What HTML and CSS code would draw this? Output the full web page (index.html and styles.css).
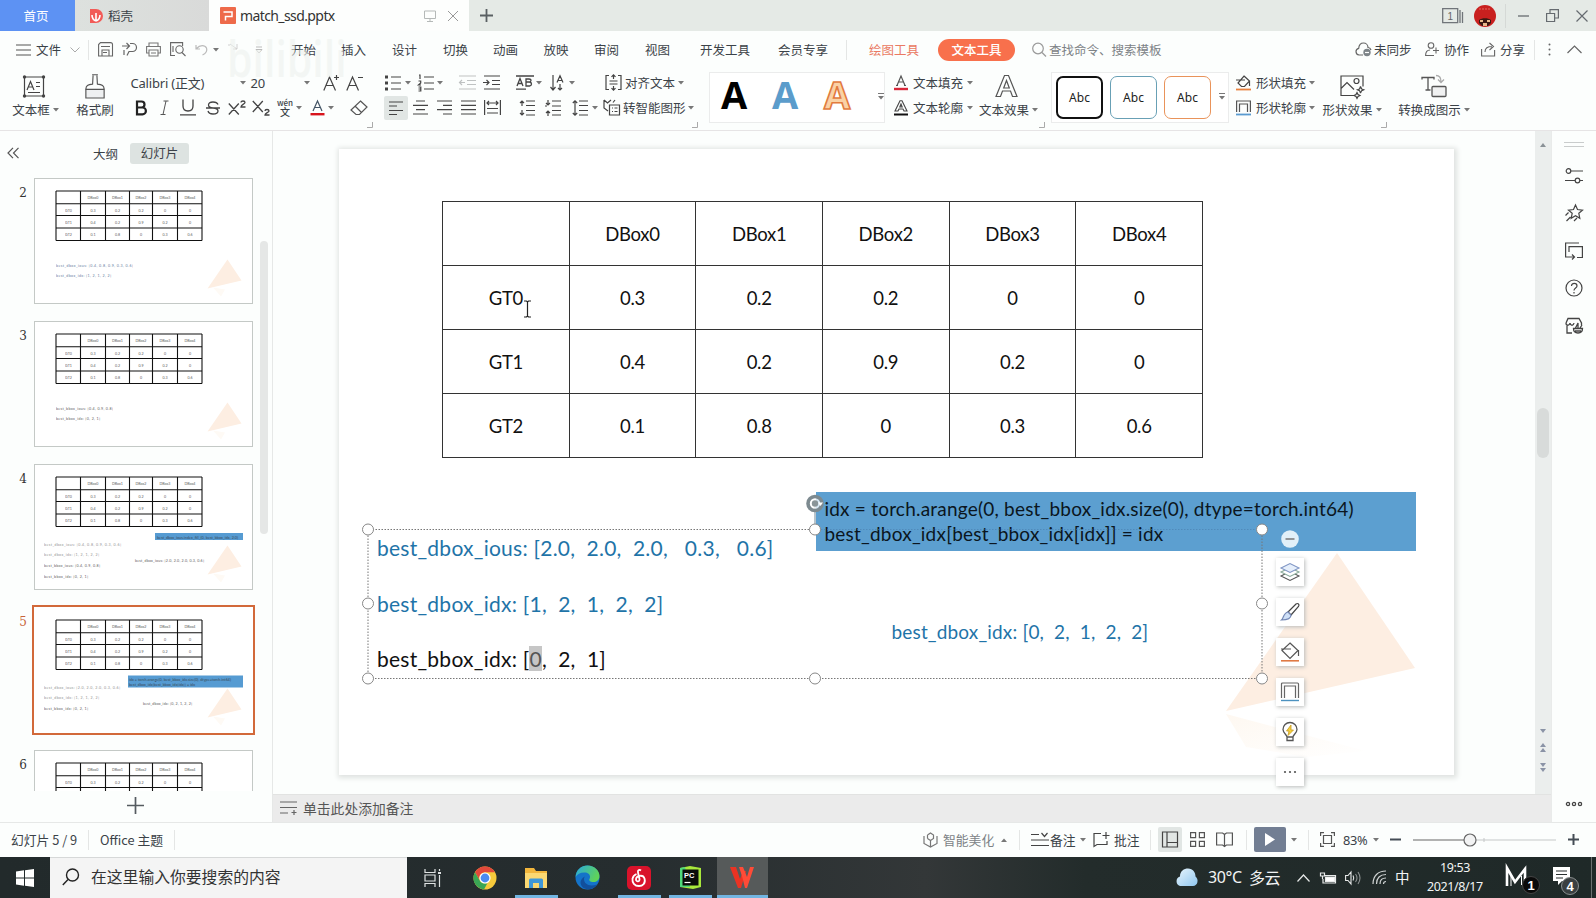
FILE: index.html
```html
<!DOCTYPE html>
<html lang="zh-CN">
<head>
<meta charset="utf-8">
<title>match_ssd.pptx</title>
<link rel="stylesheet" href="styles.css">
</head>
<body>
<svg class="defs" width="0" height="0">
  <defs>
    <symbol id="caret" viewBox="0 0 6 4"><path d="M0 0h6L3 3.6z" fill="#777"/></symbol>
    <symbol id="corner" viewBox="0 0 6 6"><path d="M0 5.5h5.5V0" fill="none" stroke="#aaa"/></symbol>
    <symbol id="mini" viewBox="0 0 219 125">
      <path d="M187 118l-8-9 12 2z" fill="#fefaf5"/>
      <path d="M193.500 81l14 21-34 8z" fill="#fdeee2"/>
      <path d="M22 12.500h146M22 25.200h146M22 37h146M22 49.500h146M22 62h146M22 12.500v49.500M46.500 12.500v49.500M71.500 12.500v49.500M95.500 12.500v49.500M118.500 12.500v49.500M143.500 12.500v49.500M168 12.500v49.500" fill="none" stroke="#111" stroke-width="1.100"/>
      <g class="mini-text" text-anchor="middle">
        <text x="59" y="20.500">DBox0</text><text x="83.500" y="20.500">DBox1</text><text x="107" y="20.500">DBox2</text><text x="131" y="20.500">DBox3</text><text x="156" y="20.500">DBox4</text>
        <text x="34.500" y="33">GT0</text><text x="59" y="33">0.3</text><text x="83.500" y="33">0.2</text><text x="107" y="33">0.2</text><text x="131" y="33">0</text><text x="156" y="33">0</text>
        <text x="34.500" y="45">GT1</text><text x="59" y="45">0.4</text><text x="83.500" y="45">0.2</text><text x="107" y="45">0.9</text><text x="131" y="45">0.2</text><text x="156" y="45">0</text>
        <text x="34.500" y="57.500">GT2</text><text x="59" y="57.500">0.1</text><text x="83.500" y="57.500">0.8</text><text x="107" y="57.500">0</text><text x="131" y="57.500">0.3</text><text x="156" y="57.500">0.6</text>
      </g>
    </symbol>
  </defs>
</svg>

<div class="app">
  <header class="titlebar">
    <div class="tab home">首页</div>
    <div class="tab docer">
      <svg width="14" height="16" viewBox="0 0 14 16"><path d="M1 1h6a7 7 0 0 1 0 14H1z" fill="#f25b57"/><path d="M7 13V5M7 13C4 12 3 10 3 7M7 13c3-1 4-3 4-6" stroke="#fff" stroke-width="1.600" fill="none"/></svg>
      <span>稻壳</span>
    </div>
    <div class="tab active">
      <svg width="16" height="17" viewBox="0 0 16 17"><rect width="16" height="17" rx="1" fill="#ee6a4a"/><path d="M3.500 5H12v4.500H5.500V13.500" fill="none" stroke="#fff" stroke-width="1.500"/></svg>
      <span class="fname">match_ssd.pptx</span>
      <svg class="mon" width="12" height="12" viewBox="0 0 12 12" fill="none" stroke="#b5b9b8"><path d="M.5 1h11v7.500H.5zM6 8.500V11M3 11.500h6"/></svg>
      <svg class="cls" width="12" height="12" viewBox="0 0 12 12" stroke="#999"><path d="M1 1l10 10M11 1L1 11"/></svg>
    </div>
    <svg class="plus" width="13" height="13" viewBox="0 0 13 13"><path d="M6.500 0v13M0 6.500h13" stroke="#5a6063" stroke-width="1.800"/></svg>
    <div class="winctl">
      <svg width="22" height="16" viewBox="0 0 22 16" fill="none" stroke="#70757a" stroke-width="1.300"><path d="M.7.7h15v14H.7zM18 2v13M20.500 4v11"/><text x="5.500" y="12" class="one">1</text></svg>
      <svg width="22" height="22" viewBox="0 0 22 22"><circle cx="11" cy="11" r="11" fill="#c9201f"/><path d="M5 15c3-2.500 9-2.500 12 0v3l-3 3H8l-3-3z" fill="#3c1812"/><path d="M6 15h3v2H6zM13 15h3v2h-3zM9 18h4v3H9z" fill="#e9b98a"/><path d="M5 4h12" stroke="#e2695e" stroke-dasharray="2 1"/></svg>
      <i class="vline"></i>
      <svg width="11" height="12" viewBox="0 0 11 12"><path d="M0 6h11" stroke="#666b70" stroke-width="1.300"/></svg>
      <svg width="13" height="13" viewBox="0 0 13 13" fill="none" stroke="#666b70" stroke-width="1.200"><path d="M.6 4.500h8v8h-8zM4 4V.6h8.400V9H9"/></svg>
      <svg width="12" height="12" viewBox="0 0 12 12" stroke="#666b70" stroke-width="1.200"><path d="M.5.5l11 11M11.500.5l-11 11"/></svg>
    </div>
  </header>

  <nav class="menu">
    <svg width="15" height="12" viewBox="0 0 15 12" stroke="#555" stroke-width="1.200"><path d="M0 1h15M0 6h15M0 11h15"/></svg>
    <span>文件</span>
    <svg width="10" height="6" viewBox="0 0 10 6" fill="none" stroke="#aaa"><path d="M.5.5L5 5 9.500.5"/></svg>
    <i class="vline"></i>
    <svg width="15" height="15" viewBox="0 0 15 15" fill="none" stroke="#666" stroke-width="1.100"><path d="M.6 13V2.500L2.500.6H12.500q2 0 2 2V14H.6zM4 14V8h7v6M3 4.500h9M5 10.500h4"/></svg>
    <svg width="15" height="15" viewBox="0 0 15 15" fill="none" stroke="#666" stroke-width="1.200"><path d="M0 4h7M4.500 1L7.500 4 4.500 7M8 1.500h2.500a3.600 3.600 0 0 1 0 8H7l-2 4M2 8v5"/></svg>
    <svg width="15" height="15" viewBox="0 0 15 15" fill="none" stroke="#777" stroke-width="1.100"><path d="M3 4V1h9v3M3 11H.6V4.500h13.800V11H12M3 8h9v6H3zM5 11h5"/></svg>
    <svg width="16" height="15" viewBox="0 0 16 15" fill="none" stroke="#666" stroke-width="1.100"><path d="M5 13.500H.6V.6h12V4M3 4v6"/><circle cx="9.500" cy="7.500" r="3.700"/><path d="M12 10.500l3.500 3.500"/></svg>
    <svg width="13" height="13" viewBox="0 0 13 13" fill="none" stroke="#bbb" stroke-width="1.200"><path d="M1 2v4h4M1.500 5.500C5 1.500 10 2 11.500 5c1 3-1 5.500-4 7"/></svg>
    <svg class="caret"><use href="#caret"/></svg>
    <svg width="10" height="13" viewBox="0 0 10 13" fill="none" stroke="#d0d0d0"><path d="M9 1v5H5M9 6L2 1M1 1v2"/></svg>
    <svg width="8" height="8" viewBox="0 0 8 8" fill="none" stroke="#bbb"><path d="M1 1h6M1 3.500h6L4 7z"/></svg>
    <span>开始</span><span>插入</span><span>设计</span><span>切换</span><span>动画</span><span>放映</span><span>审阅</span><span>视图</span><span>开发工具</span><span>会员专享</span>
    <i class="vline"></i>
    <span class="draw">绘图工具</span>
    <span class="pill">文本工具</span>
    <svg width="15" height="15" viewBox="0 0 15 15" fill="none" stroke="#999" stroke-width="1.200"><circle cx="6" cy="6.500" r="5.300"/><path d="M10 10.500l4 4"/></svg>
    <span class="dim">查找命令、搜索模板</span>
    <svg width="17" height="15" viewBox="0 0 17 15" fill="none" stroke="#666" stroke-width="1.200"><path d="M8 13H4a3.400 3.400 0 0 1-.3-6.700C4 2.500 6 1 8.500 1 11 1 13 3 13 5.500c1.500 0 2.500 1 3 2.500"/><circle cx="12" cy="10.500" r="3.700" fill="#7d8488" stroke="none"/><path d="M10 10.500h4" stroke="#fff"/></svg>
    <span>未同步</span>
    <svg width="15" height="15" viewBox="0 0 15 15" fill="none" stroke="#666" stroke-width="1.100"><circle cx="6" cy="3.500" r="2.800"/><path d="M9 13.500H.6c0-4 2-5.500 4.500-5.500M8 8.500h6M11 5.500v6"/></svg>
    <span>协作</span>
    <svg width="15" height="15" viewBox="0 0 15 15" fill="none" stroke="#666" stroke-width="1.100"><path d="M.6 7v7h13V8M4 10c0-4 2.500-5.500 7-5.500M8.500 1l4 3.500-4 3.500"/></svg>
    <span>分享</span>
    <i class="vline"></i>
    <svg width="3" height="13" viewBox="0 0 3 13" fill="#666"><circle cx="1.500" cy="1.500" r="1"/><circle cx="1.500" cy="6.500" r="1"/><circle cx="1.500" cy="11.500" r="1"/></svg>
    <svg width="15" height="9" viewBox="0 0 15 9" fill="none" stroke="#666" stroke-width="1.200"><path d="M.5 8L7.500 1l7 7"/></svg>
  </nav>

  <section class="ribbon">
    <div class="big g-box">
      <svg width="24" height="24" viewBox="0 0 24 24" fill="none" stroke="#444" stroke-width="1.200"><path d="M2.500 2.500h19v19h-19z"/><path d="M5 15.500L8.500 7l3.500 8.500M6.300 12.500h4.500M14 8h4M14 12h4M6 18h12"/><g fill="#444" stroke="none"><circle cx="2.500" cy="2.500" r="1.700"/><circle cx="21.500" cy="2.500" r="1.700"/><circle cx="2.500" cy="21.500" r="1.700"/><circle cx="21.500" cy="21.500" r="1.700"/></g></svg>
      <div class="lab">文本框<svg class="caret"><use href="#caret"/></svg></div>
    </div>
    <div class="big g-brush">
      <svg width="22" height="26" viewBox="0 0 22 26" fill="none" stroke="#555" stroke-width="1.200"><path d="M1.500 16h19v9h-19z" fill="#eef0f1"/><path d="M1.500 16c0-4 2-5 7-5.500L9 1.500M20.500 16c0-4-2-5-7-5.500L13 1.500M8 .8h6"/></svg>
      <div class="lab">格式刷</div>
    </div>

    <div class="stack g-font">
      <div class="row r-font1">
        <span class="ui">Calibri (正文)</span><svg class="caret"><use href="#caret"/></svg>
        <span class="ui">20</span><svg class="caret"><use href="#caret"/></svg>
        <svg width="17" height="18" viewBox="0 0 17 18" fill="none" stroke="#444" stroke-width="1.200"><path d="M.8 16.500L6.500 3l6 13.500M3 11.500h7.500M11 3.500h5M13.500 1v5"/></svg>
        <svg width="17" height="18" viewBox="0 0 17 18" fill="none" stroke="#444" stroke-width="1.200"><path d="M.8 16.500L6.500 3l6 13.500M3 11.500h7.500M12 3.500h5"/></svg>
      </div>
      <div class="row r-font2">
        <svg width="13" height="16" viewBox="0 0 13 16" fill="none" stroke="#222" stroke-width="2.200"><path d="M2 1.500h4.500a3 3 0 0 1 0 6H2zM2 7.500h5.500a3.400 3.400 0 0 1 0 6.800H2z"/></svg>
        <svg width="9" height="16" viewBox="0 0 9 16" stroke="#555"><path d="M3.500 1h5M.5 14.500h5M6 1L3 14.500"/></svg>
        <svg width="16" height="17" viewBox="0 0 16 17" fill="none" stroke="#444" stroke-width="1.300"><path d="M3 .5V7q0 5 5 5t5-5V.5M0 15.800h16"/></svg>
        <svg width="14" height="14" viewBox="0 0 14 14" fill="none" stroke="#444" stroke-width="1.300"><path d="M12 3.500C11 1 9.500 1 7 1 4 1 2.500 2 2.500 4 2.500 6 4 6.700 7 7s5 1 5 3-2 3-5 3-4.500-1-5-3M0 7h14"/></svg>
        <svg width="19" height="16" viewBox="0 0 19 16" fill="none" stroke="#444" stroke-width="1.300"><path d="M.8 3.500l10 11M10.800 3.500l-10 11M13 2.500c0-2 4-2 4 0 0 1.500-4 2-4 4.500h4.500"/></svg>
        <svg width="19" height="17" viewBox="0 0 19 17" fill="none" stroke="#444" stroke-width="1.300"><path d="M.8 2l10 11M10.800 2l-10 11M13 12c0-2 4-2 4 0 0 1.500-4 2-4 4h4.500"/></svg>
        <span class="wen"><b>wén</b><b>文</b></span><svg class="caret"><use href="#caret"/></svg>
        <svg width="15" height="16" viewBox="0 0 15 16" fill="none" stroke="#456" stroke-width="1.200"><path d="M3 11L7.500 1 12 11M4.700 7.500h5.600"/><path d="M.5 14.200h14" stroke="#d8141c" stroke-width="2.400"/></svg>
        <svg class="caret"><use href="#caret"/></svg>
        <svg width="18" height="16" viewBox="0 0 18 16" fill="none" stroke="#555" stroke-width="1.200"><path d="M10.500 1l6.500 6-7.500 7.500H6L1 10zM5 6l6.500 6.500"/></svg>
      </div>
      <svg class="corner"><use href="#corner"/></svg>
    </div>

    <div class="stack g-para">
      <div class="row r-para1">
        <svg width="16" height="16" viewBox="0 0 16 16" stroke="#444" stroke-width="1.200"><path d="M6 2h10M6 8h10M6 14h10"/><path d="M0 2h3M0 8h3M0 14h3" stroke-width="3"/></svg><svg class="caret"><use href="#caret"/></svg>
        <svg width="16" height="16" viewBox="0 0 16 16" fill="none" stroke="#444" stroke-width="1.200"><path d="M6 2h10M6 8h10M6 14h10M1 0h1v4M.5 6h2.200v2L.5 10h2.500M.5 12h2.300v4H.5M.5 14h2"/></svg><svg class="caret"><use href="#caret"/></svg>
        <svg width="17" height="15" viewBox="0 0 17 15" fill="none" stroke="#bfc2c2" stroke-width="1.200"><path d="M0 1h17M8 5.500h9M8 9.500h9M0 14h17M0 7.500h6M3 5L.5 7.500 3 10"/></svg>
        <svg width="17" height="15" viewBox="0 0 17 15" fill="none" stroke="#444" stroke-width="1.200"><path d="M1 1h16M9 5.500h8M9 9.500h8M1 14h16M0 7.500h6M3.500 5L6 7.500 3.500 10"/></svg>
        <svg width="18" height="15" viewBox="0 0 18 15" fill="none" stroke="#444" stroke-width="1.300"><path d="M0 1h18M1 11l3-7.500L7 11M2 8.500h4M10 4v7h3.500q2-.3 2-2t-2-2H10h3q2 0 2-1.500T13 4zM0 14.200h10"/></svg><svg class="caret"><use href="#caret"/></svg>
        <svg width="15" height="16" viewBox="0 0 15 16" fill="none" stroke="#444" stroke-width="1.200"><path d="M3 0v15M.5 12L3 15l2.500-3M7 7.500L10 .8l3 6.700M8 5.500h4M10 9v6M8 13l2 2 2-2"/></svg><svg class="caret"><use href="#caret"/></svg>
        <svg width="17" height="17" viewBox="0 0 17 17" fill="none" stroke="#444" stroke-width="1.200"><path d="M4 1.500H1v14h3M13 1.500h3v14h-3M4.500 7h8M4.500 10h8M8.500 5V.8M6.500 2.800l2-2 2 2M8.500 12v4.200M6.500 14.200l2 2 2-2"/></svg>
        <span>对齐文本</span><svg class="caret"><use href="#caret"/></svg>
      </div>
      <div class="row r-para2">
        <svg class="sel" width="24" height="24" viewBox="0 0 24 24" stroke="#444" stroke-width="1.200"><path d="M5 6h14M5 10h8M5 14.500h14M5 18.500h8"/></svg>
        <svg width="15" height="15" viewBox="0 0 15 15" stroke="#444" stroke-width="1.200"><path d="M3 1h9M0 5.300h15M3 9.700h9M0 14h15"/></svg>
        <svg width="15" height="15" viewBox="0 0 15 15" stroke="#444" stroke-width="1.200"><path d="M0 1h15M6 5.300h9M0 9.700h15M6 14h9"/></svg>
        <svg width="15" height="15" viewBox="0 0 15 15" stroke="#444" stroke-width="1.200"><path d="M0 1h15M0 5.300h15M0 9.700h15M0 14h15"/></svg>
        <svg width="17" height="15" viewBox="0 0 17 15" fill="none" stroke="#444" stroke-width="1.200"><path d="M.6 0v15M16.400 0v15M3 3h11M5 1L3 3l2 2M12 1l2 2-2 2M3 8.500h11M3 13h11"/></svg>
        <svg width="16" height="16" viewBox="0 0 16 16" fill="none" stroke="#444" stroke-width="1.200"><path d="M7 1h9M7 5.500h9M7 10.500h9M7 15h9M3 1v5M1 3l2-2 2 2M3 10v5M1 13l2 2 2-2"/></svg>
        <svg width="16" height="16" viewBox="0 0 16 16" fill="none" stroke="#444" stroke-width="1.200"><path d="M7 1h9M0 6h2M7 6h9M7 10.500h9M7 15h9M3 0v5M1 3l2 2 2-2M3 11v5M1 13l2-2 2 2"/></svg>
        <svg width="16" height="16" viewBox="0 0 16 16" fill="none" stroke="#444" stroke-width="1.200"><path d="M7 1h9M7 5.500h9M7 10.500h9M7 15h9M3 1v14M.8 3L3 .8 5.200 3M.8 13L3 15.200 5.200 13"/></svg><svg class="caret"><use href="#caret"/></svg>
        <svg width="17" height="17" viewBox="0 0 17 17" fill="none" stroke="#444" stroke-width="1.200"><path d="M10 3.500L12 1M1 1l3.500 3L8 1M1 1v8l4 3M6.500 6h10v10h-10zM9 9h1M11.500 9h3M9 12.500h1M11.500 12.500h3"/></svg>
        <span>转智能图形</span><svg class="caret"><use href="#caret"/></svg>
      </div>
      <svg class="corner"><use href="#corner"/></svg>
    </div>

    <div class="gallery g-art">
      <svg width="28" height="30" viewBox="0 0 28 30"><text x="14" y="28" class="wa" fill="#000">A</text></svg>
      <svg width="28" height="30" viewBox="0 0 28 30"><text x="14" y="28" class="wa" fill="#5b9ccb">A</text></svg>
      <svg width="30" height="30" viewBox="0 0 30 30"><text x="15" y="28" class="wa" fill="#fad2a5" stroke="#e27b3e" stroke-width="1.600">A</text></svg>
      <svg class="more" width="6" height="7" viewBox="0 0 6 7"><path d="M0 .5h6" stroke="#777"/><path d="M0 3h6L3 6.500z" fill="#777"/></svg>
    </div>

    <div class="stack g-tfill">
      <div class="row r-fill">
        <svg width="14" height="16" viewBox="0 0 14 16" fill="none" stroke="#555" stroke-width="1.200"><path d="M3 10.500L7 1l4 9.500M4.500 7h5M2 10.500h2M10 10.500h2"/><path d="M0 14h14" stroke="#d8283a" stroke-width="2.400"/></svg>
        <span>文本填充</span><svg class="caret"><use href="#caret"/></svg>
      </div>
      <div class="row r-fill">
        <svg width="14" height="16" viewBox="0 0 14 16" fill="none" stroke="#444" stroke-width="1.100"><path d="M1 11L6 .8h2L13 11h-3l-1-2H5l-1 2zM7 4L5.800 7h2.400z"/><path d="M0 14.500h14" stroke="#111" stroke-width="2"/></svg>
        <span>文本轮廓</span><svg class="caret"><use href="#caret"/></svg>
      </div>
    </div>
    <div class="big g-teff">
      <svg width="23" height="24" viewBox="0 0 23 24" fill="none" stroke="#555" stroke-width="1.200"><path d="M1 22L9.500 1h4L22 22h-4.500l-2-5.500h-8l-2 5.500zM11.500 6L8.700 13.500h5.600z"/></svg>
      <div class="lab">文本效果<svg class="caret"><use href="#caret"/></svg></div>
      <svg class="corner"><use href="#corner"/></svg>
    </div>

    <div class="gallery g-shape">
      <div class="abc k">Abc</div><div class="abc b">Abc</div><div class="abc o">Abc</div>
      <svg class="more" width="6" height="7" viewBox="0 0 6 7"><path d="M0 .5h6" stroke="#777"/><path d="M0 3h6L3 6.500z" fill="#777"/></svg>
    </div>

    <div class="stack g-sfill">
      <div class="row r-fill">
        <svg width="15" height="16" viewBox="0 0 15 16" fill="none" stroke="#444" stroke-width="1.200"><path d="M8 1l5.500 5-5 5.500h-3L2 8zM0 5h9M13.500 6v5"/><path d="M0 14.500h15" stroke="#e8823f" stroke-width="1.800"/></svg>
        <span>形状填充</span><svg class="caret"><use href="#caret"/></svg>
      </div>
      <div class="row r-fill">
        <svg width="15" height="16" viewBox="0 0 15 16" fill="none" stroke="#555" stroke-width="1.200"><path d="M.6 12V1h13.800v11M3.500 12V4h8v8"/><path d="M0 14.500h15" stroke="#5a9bd0" stroke-width="1.800"/></svg>
        <span>形状轮廓</span><svg class="caret"><use href="#caret"/></svg>
      </div>
    </div>
    <div class="big g-seff">
      <svg width="24" height="24" viewBox="0 0 24 24" fill="none" stroke="#444" stroke-width="1.200"><path d="M14 21H1V1.500h22V12M1 14l6-6 7 7"/><circle cx="16.500" cy="6.500" r="2.500"/><path d="M20.500 12l1.200 2.500 2 .8-2 .8-1.200 2.500M17 18l1 2 2 1-2 1-1 2-1-2-2-1 2-1zM20.500 12l-1 2.500-2 .8 2 .8 1 2.500"/></svg>
      <div class="lab">形状效果<svg class="caret"><use href="#caret"/></svg></div>
      <svg class="corner"><use href="#corner"/></svg>
    </div>
    <div class="big g-conv">
      <svg width="26" height="24" viewBox="0 0 26 24" fill="none" stroke="#555" stroke-width="1.300"><path d="M1 5V3h12v2M7 3v12M4.500 15.500h5"/><path d="M15 1q5 0 5 6M17 5l3 3 3-3" stroke="#aaa"/><rect x="11" y="12" width="14" height="10" rx="1" fill="#f0f1f1"/></svg>
      <div class="lab">转换成图示<svg class="caret"><use href="#caret"/></svg></div>
    </div>
  </section>
  <div class="watermark">bilibili</div>

  <main class="work">
    <aside class="panel">
      <div class="ptabs">
        <svg width="12" height="12" viewBox="0 0 12 12" fill="none" stroke="#555" stroke-width="1.200"><path d="M6 .8L1 6l5 5.200M11.500.8l-5 5.200 5 5.200"/></svg>
        <span>大纲</span><span class="on">幻灯片</span>
      </div>
      <div class="plist">
        <div class="item"><b>2</b><svg class="thumb" viewBox="0 0 219 125"><use href="#mini" width="219" height="125"/><g class="mini-text blue"><text x="22" y="88" textLength="77">best_dbox_ious: [0.4, 0.8, 0.9, 0.3, 0.6]</text><text x="22" y="98.500" textLength="55">best_dbox_idx: [1, 2, 1, 2, 2]</text></g></svg></div>
        <div class="item"><b>3</b><svg class="thumb" viewBox="0 0 219 125"><use href="#mini" width="219" height="125"/><g class="mini-text"><text x="22" y="88" textLength="57">best_bbox_ious: [0.4, 0.9, 0.8]</text><text x="22" y="98.500" textLength="44">best_bbox_idx: [0, 2, 1]</text></g></svg></div>
        <div class="item"><b>4</b><svg class="thumb" viewBox="0 0 219 125"><use href="#mini" width="219" height="125"/><rect x="121" y="68.500" width="88" height="7" fill="#569bd2"/><g class="mini-text"><text x="123" y="74" textLength="81">best_dbox_ious.index_fill_(0, best_bbox_idx, 2.0)</text><text x="10" y="81" textLength="77" class="gray">best_dbox_ious: [0.4, 0.8, 0.9, 0.3, 0.6]</text><text x="10" y="91.500" textLength="55" class="gray">best_dbox_idx: [1, 2, 1, 2, 2]</text><text x="101" y="97" textLength="69">best_dbox_ious: [2.0, 2.0, 2.0, 0.3, 0.6]</text><text x="10" y="102.500" textLength="56">best_bbox_ious: [0.4, 0.9, 0.8]</text><text x="10" y="113" textLength="44">best_bbox_idx: [0, 2, 1]</text></g></svg></div>
        <div class="item cur"><b>5</b><svg class="thumb" viewBox="0 0 219 125"><use href="#mini" width="219" height="125"/><rect x="94" y="68" width="115" height="12" fill="#569bd2"/><g class="mini-text"><text x="95" y="73" textLength="102">idx = torch.arange(0, best_bbox_idx.size(0), dtype=torch.int64)</text><text x="95" y="78" textLength="66">best_dbox_idx[best_bbox_idx[idx]] = idx</text><text x="10" y="81" textLength="76" class="gray">best_dbox_ious: [2.0, 2.0, 2.0, 0.3, 0.6]</text><text x="10" y="91.500" textLength="55" class="gray">best_dbox_idx: [1, 2, 1, 2, 2]</text><text x="109" y="97" textLength="49">best_dbox_idx: [0, 2, 1, 2, 2]</text><text x="10" y="102.500" textLength="44">best_bbox_idx: [0, 2, 1]</text></g></svg></div>
        <div class="item"><b>6</b><svg class="thumb" viewBox="0 0 219 125"><use href="#mini" width="219" height="125"/></svg></div>
        <i class="pscroll"></i>
      </div>
      <div class="padd"><svg width="17" height="17" viewBox="0 0 17 17"><path d="M8.500 0v17M0 8.500h17" stroke="#555b60" stroke-width="1.700"/></svg></div>
    </aside>

    <div class="center">
      <div class="canvas">
        <div class="stage">
          <div class="slide">
            <svg class="deco" width="200" height="210" viewBox="0 0 200 210"><defs><linearGradient id="fade" x1="0" y1="0" x2="1" y2="1"><stop offset="0" stop-color="#fef8f1"/><stop offset="1" stop-color="#fff"/></linearGradient></defs><path d="M111 0l78 115-189 43z" fill="#fdeee2"/><path d="M0 161l20 33 60 10 60-6z" fill="url(#fade)"/></svg>
            <table class="grid">
              <tr><td></td><td>DBox0</td><td>DBox1</td><td>DBox2</td><td>DBox3</td><td>DBox4</td></tr>
              <tr><td>GT0</td><td>0.3</td><td>0.2</td><td>0.2</td><td>0</td><td>0</td></tr>
              <tr><td>GT1</td><td>0.4</td><td>0.2</td><td>0.9</td><td>0.2</td><td>0</td></tr>
              <tr><td>GT2</td><td>0.1</td><td>0.8</td><td>0</td><td>0.3</td><td>0.6</td></tr>
            </table>
            <div class="code"><div class="l1">idx = torch.arange(0, best_bbox_idx.size(0), dtype=torch.int64)</div><div class="l2">best_dbox_idx[best_bbox_idx[idx]] = idx</div></div>
            <div class="result">best_dbox_idx: [0,  2,  1,  2,  2]</div>
            <div class="textbox"><p class="a">best_dbox_ious: [2.0,  2.0,  2.0,   0.3,   0.6]</p><p class="b">best_dbox_idx: [1,  2,  1,  2,  2]</p><p class="c">best_bbox_idx: [<mark>0</mark>,  2,  1]</p></div>
            <svg class="selection" width="920" height="200" viewBox="0 0 920 200">
              <path d="M460 39.500H13v149h894v-76" fill="none" stroke="#777" stroke-dasharray="1.500 1.500"/>
              <path d="M460 39.500h447" fill="none" stroke="#4a7fae" stroke-dasharray="1.500 1.500" stroke-opacity=".6"/>
              <path d="M907 39.500v74" fill="none" stroke="#777" stroke-dasharray="1.500 1.500"/>
              <path d="M460 17v22" stroke="#b8c4cc" stroke-width="2"/>
              <circle cx="460" cy="13.500" r="7" fill="#fff" fill-opacity=".75" stroke="#7d8a90" stroke-width="3.600"/>
              <circle cx="460" cy="13.500" r="3.200" fill="#8a9598"/>
              <path d="M463 12.500h5l-2.500 3.500z" fill="#fff"/>
              <g fill="#fff" stroke="#888"><circle cx="13" cy="39.500" r="5.500"/><circle cx="460" cy="39.500" r="5.500"/><circle cx="907" cy="39.500" r="5.500"/><circle cx="13" cy="113.500" r="5.500"/><circle cx="907" cy="113.500" r="5.500"/><circle cx="13" cy="188.500" r="5.500"/><circle cx="460" cy="188.500" r="5.500"/><circle cx="907" cy="188.500" r="5.500"/></g>
            </svg>
            <svg class="cursor" width="9" height="18" viewBox="0 0 9 18" fill="none" stroke="#222" stroke-width="1.200"><path d="M1 1h2.500l1 1 1-1H8M1 17h2.500l1-1 1 1H8M4.500 2v14"/></svg>
            <div class="float">
              <svg class="min" width="18" height="18" viewBox="0 0 18 18"><circle cx="9" cy="9" r="8.800" fill="#e2f0f8"/><path d="M4.500 9h9" stroke="#777" stroke-width="1.500"/></svg>
              <div class="fb"><svg width="20" height="20" viewBox="0 0 20 20" fill="#fff" stroke="#555" stroke-width="1.100"><path d="M1 14l9-4.500 9 4.500-9 4.500z"/><path d="M1 10l9-4.500 9 4.500-9 4.500z" stroke="#8a9"/><path d="M1 6l9-4.500L19 6l-9 4.500z" fill="#e6effb" stroke="#7f95c4"/></svg></div>
              <div class="fb"><svg width="20" height="20" viewBox="0 0 20 20" fill="none" stroke="#444" stroke-width="1.200"><path d="M8 10l8-8q1.500-1 2.500 0t0 2.500l-7.500 8.500z"/><path d="M8 10l3 3c0 3-2 5-9.500 5C4 16 3 11 8 10z" fill="#cfe0f7" stroke="#7488b5"/></svg></div>
              <div class="fb"><svg width="20" height="20" viewBox="0 0 20 20" fill="none" stroke="#555" stroke-width="1.200"><path d="M10 1l8 7.500-8 8-8-8zM1 7h10M18.500 8v6"/><path d="M1 18.800h18" stroke="#e07a45" stroke-width="1.600"/></svg></div>
              <div class="fb"><svg width="20" height="20" viewBox="0 0 20 20" fill="none" stroke="#666" stroke-width="1.200"><path d="M1.500 16V2q0-1 1-1h15q1 0 1 1v14M4.500 16V4h11v12"/><path d="M1 18.500h18" stroke="#4d92c0" stroke-width="1.400"/></svg></div>
              <div class="fb"><svg width="20" height="20" viewBox="0 0 20 20" fill="none" stroke="#555" stroke-width="1.300"><path d="M7 15c0-2-4-4-4-7.500a7 7 0 0 1 14 0c0 3.500-4 5.500-4 7.500zM7 15v3.500h6V15"/><path d="M11 3L6.500 9H9l-1 4.500L13.500 8H11z" fill="#f6d03c" stroke="#c69a22" stroke-width=".8"/></svg></div>
              <div class="fb"><svg width="14" height="4" viewBox="0 0 14 4" fill="#555"><circle cx="2" cy="2" r="1.100"/><circle cx="7" cy="2" r="1.100"/><circle cx="12" cy="2" r="1.100"/></svg></div>
            </div>
          </div>
        </div>
        <div class="vbar">
          <svg width="6" height="4" viewBox="0 0 6 4"><path d="M0 4h6L3 0z" fill="#8a9196"/></svg>
          <i></i>
          <svg class="nav" width="6" height="48" viewBox="0 0 6 48" fill="#8a93a6"><path d="M0 2h6L3 6zM0 20h6l-3-4zM0 25h6l-3-4zM0 36h6l-3 4zM0 41h6l-3 4z"/></svg>
        </div>
      </div>
      <div class="notes"><svg width="17" height="14" viewBox="0 0 17 14" stroke="#666" stroke-width="1.200"><path d="M0 1h17M0 6.500h17M0 12h8M14 9v5M11.500 11.500h5"/></svg><span>单击此处添加备注</span></div>
    </div>

    <aside class="rail">
      <svg width="20" height="5" viewBox="0 0 20 5" stroke="#c9cccc"><path d="M0 .5h20M0 4.500h20"/></svg>
      <svg width="18" height="18" viewBox="0 0 18 18" fill="none" stroke="#444" stroke-width="1.200"><circle cx="3.500" cy="4" r="2.300"/><circle cx="12.500" cy="13.500" r="2.300"/><path d="M6 4h12M0 13.500h10M15 13.500h3"/></svg>
      <svg width="18" height="18" viewBox="0 0 18 18" fill="none" stroke="#444" stroke-width="1.200"><path d="M10.500 1l2 4.500 5 .6-3.700 3.200 1 5-4.300-2.600-4.300 2.600 1-5L3.500 6.100l5-.6zM.5 11.500l3-3M1.500 17l4-4M9 17l3-3"/></svg>
      <svg width="18" height="18" viewBox="0 0 18 18" fill="none" stroke="#444" stroke-width="1.200"><path d="M14 1H.6v14H9M7 12.500L9.500 15 7 17.500M4 10V4.600h13.400V15.500H12"/></svg>
      <svg width="18" height="18" viewBox="0 0 18 18" fill="none" stroke="#444" stroke-width="1.200"><circle cx="9" cy="9" r="8"/><path d="M6.500 7c0-3.500 5.500-3.500 5.500 0C12 9 9 9 9 11.500M9 13v1.500"/></svg>
      <svg width="18" height="18" viewBox="0 0 18 18" fill="none" stroke="#444" stroke-width="1.300"><path d="M2 9v7h5M1 6l2-4.500h11L16.500 6v2M1 6c0 3 3.500 3 4 0 .5 3 3.500 3 4 0"/><path d="M8.500 11.500h9c0 6-9 6-9 0zM13 11V6l-2.500 5M15 11l2-3M10 14h6"/></svg>
      <svg class="ooo" width="18" height="6" viewBox="0 0 18 6" fill="none" stroke="#444" stroke-width="1.300"><circle cx="3" cy="3" r="1.600"/><circle cx="9" cy="3" r="1.600"/><circle cx="15" cy="3" r="1.600"/></svg>
    </aside>
  </main>

  <footer class="status">
    <span>幻灯片 5 / 9</span><i class="vline"></i><span>Office 主题</span><i class="vline"></i>
    <svg width="15" height="16" viewBox="0 0 15 16" fill="none" stroke="#777" stroke-width="1.200"><path d="M4.500 3L7.500 1l3 2v3.500l-3 2-3-2M4.500 6.500V3M1 4v7.500l6.500 3.500 6.500-3.500V4M7.500 8.500V15"/></svg>
    <span class="dim">智能美化</span><svg class="caret up"><use href="#caret"/></svg><i class="vline"></i>
    <svg width="18" height="14" viewBox="0 0 18 14" fill="none" stroke="#444" stroke-width="1.200"><path d="M0 1.500h8M0 7h18M0 12.500h18M10.500 0L13.500 3.500 16.500 0"/></svg>
    <span>备注</span><svg class="caret"><use href="#caret"/></svg>
    <svg width="17" height="16" viewBox="0 0 17 16" fill="none" stroke="#444" stroke-width="1.200"><path d="M8 1.500H1v13l3-2h10V9M13 0v7M9.500 3.500h7"/></svg>
    <span>批注</span><i class="vline"></i>
    <svg class="sel" width="24" height="25" viewBox="0 0 24 25" fill="none" stroke="#444" stroke-width="1.200"><path d="M4.500 5h15v15h-15zM9 5v15M9 15.500h10.500"/></svg>
    <svg width="15" height="15" viewBox="0 0 15 15" fill="none" stroke="#555" stroke-width="1.200"><path d="M.6.6h5v5h-5zM9.400.6h5v5h-5zM.6 9.400h5v5h-5zM9.400 9.400h5v5h-5z"/></svg>
    <svg width="17" height="15" viewBox="0 0 17 15" fill="none" stroke="#555" stroke-width="1.200"><path d="M.6 1h6l1.900 1.500L10.400 1h6v12h-6l-1.900 1.500L6.600 13h-6zM8.500 2.500v12"/></svg>
    <i class="vline"></i>
    <div class="play"><svg width="10" height="13" viewBox="0 0 10 13"><path d="M0 0l10 6.500L0 13z" fill="#fff"/></svg></div>
    <svg class="caret"><use href="#caret"/></svg><i class="vline"></i>
    <svg width="15" height="15" viewBox="0 0 15 15" fill="none" stroke="#555" stroke-width="1.200"><path d="M.6 4V.6H4M11 .6h3.400V4M14.400 11v3.400H11M4 14.400H.6V11M3.500 3.500h8v8h-8z"/></svg>
    <span class="ui">83%</span><svg class="caret"><use href="#caret"/></svg>
    <svg width="11" height="11" viewBox="0 0 11 11"><path d="M0 5.500h11" stroke="#444c55" stroke-width="2"/></svg>
    <svg width="143" height="14" viewBox="0 0 143 14"><path d="M57 7h86M71 5v4" stroke="#c5c8c8"/><path d="M0 7h57" stroke="#666" stroke-width="1.200"/><circle cx="57" cy="7" r="6" fill="#f2f3f3" stroke="#666" stroke-width="1.200"/></svg>
    <svg width="11" height="11" viewBox="0 0 11 11"><path d="M0 5.500h11M5.500 0v11" stroke="#444c55" stroke-width="2"/></svg>
  </footer>

  <footer class="taskbar">
    <div class="start"><svg width="18" height="18" viewBox="0 0 18 18" fill="#fff"><path d="M0 2.500L8 1.300V8.500H0zM9 1.200L18 0v8.500H9zM0 9.500h8v7.200L0 15.500zM9 9.500h9V18L9 16.800z"/></svg></div>
    <div class="search"><svg width="18" height="18" viewBox="0 0 18 18" fill="none" stroke="#222" stroke-width="1.400"><circle cx="10.500" cy="7" r="6"/><path d="M6 11.500L.8 17"/></svg><span>在这里输入你要搜索的内容</span></div>
    <div class="tk view"><svg width="18" height="18" viewBox="0 0 18 18" fill="none" stroke="#dfe3e3" stroke-width="1.200"><path d="M1 0v3.500h10V0M1 18v-3.500h10V18M1 6h10v6H1zM15.500 0v2M15.500 6v12"/><path d="M14 4h3" stroke-width="2"/></svg></div>
    <div class="tk"><svg width="24" height="24" viewBox="0 0 24 24"><circle cx="12" cy="12" r="11.500" fill="#f6c93b"/><path d="M2 6.300A11.500 11.500 0 0 1 22 6.300H12A5.700 5.700 0 0 0 7 15z" fill="#e2493b"/><path d="M2 6.300l5 8.700c1 1.800 4 3.500 7.500 2L11 23.500A11.500 11.500 0 0 1 2 6.300z" fill="#3aa655"/><circle cx="12" cy="12" r="5.600" fill="#fff"/><circle cx="12" cy="12" r="4.400" fill="#4a8bf0"/></svg></div>
    <div class="tk run"><svg width="24" height="22" viewBox="0 0 24 22"><path d="M1 1h9l2 3h11v17H1z" fill="#f2b63c"/><path d="M1 6h22v15H1z" fill="#fbd872"/><path d="M5 21v-8q0-1.500 1.500-1.500h11Q19 11.500 19 13v8h-4v-5H9v5z" fill="#3f97d8"/></svg></div>
    <div class="tk"><svg width="25" height="25" viewBox="0 0 25 25"><defs><linearGradient id="eg" x1="0" y1="0" x2="1" y2=".4"><stop offset="0" stop-color="#28a9e0"/><stop offset="1" stop-color="#5fd35a"/></linearGradient></defs><circle cx="12.500" cy="12.500" r="12" fill="#1473c9"/><path d="M.6 12C1 5 6 .5 12.500.5 20 .5 24.500 6 24.500 11c0 4-3 6-6 6-3.500 0-5-1.500-4-3 1.500-2.500 0-6-4-6.500C6 7 2 9 .6 12z" fill="url(#eg)"/><path d="M9 14c0 5 5 8 13 5.500-4 6-12 6-15 2s-1-8 3-10c-1 1-1 2-1 2.500z" fill="#124f9c"/></svg></div>
    <div class="tk run"><svg width="24" height="24" viewBox="0 0 24 24"><rect width="24" height="24" rx="5" fill="#d9132b"/><path d="M14 4.500c-2-1.500-3.500 0-3 2l1.500 6.500c.5 3-3.500 3-3.500.5 0-4 7-5.500 8.500-1 1.500 5-2 7.500-5.500 7.500-4.500 0-7-3.500-6.500-7 .3-2.500 1.500-4 4-5" fill="none" stroke="#fff" stroke-width="1.800"/></svg></div>
    <div class="tk run"><svg width="21" height="23" viewBox="0 0 21 23"><path d="M0 2L10 0l11 2v19l-8 2L0 21z" fill="#a8e83c"/><path d="M0 2l5-1 5 20-10 0z" fill="#4fd87a"/><path d="M2.500 3.500h16v16h-16z" fill="#0a0d0a"/><text x="4" y="11.500" class="pc">PC</text><path d="M4.500 16.500h6" stroke="#fff" stroke-width="1.200"/></svg></div>
    <div class="tk run cur"><svg width="24" height="21" viewBox="0 0 24 21"><path d="M0 0h6l4 12 3-8 3 0-5 17H8z" fill="#ea3323"/><path d="M9 0h4l4 10 3-10h4l-7 21h-2L12 9z" fill="#ff4b37"/></svg></div>
    <div class="tray">
      <svg width="23" height="19" viewBox="0 0 23 19"><defs><linearGradient id="cl" x1="0" y1="0" x2="1" y2="1"><stop offset="0" stop-color="#e9f6fd"/><stop offset="1" stop-color="#8fc6ef"/></linearGradient></defs><path d="M5 18a5 5 0 0 1 0-9.500C5 3 9 .5 13 .5c5 0 7.500 4 7.500 8C24 11 23 18 18 18z" fill="url(#cl)"/></svg>
      <span class="temp">30°C</span><span class="temp">多云</span>
      <svg width="13" height="8" viewBox="0 0 13 8" fill="none" stroke="#e8eaea" stroke-width="1.200"><path d="M.5 7.500l6-6.500 6 6.500"/></svg>
      <svg width="17" height="12" viewBox="0 0 17 12" fill="none" stroke="#e8eaea" stroke-width="1.200"><path d="M4 3.500h11.500v7.500H3V7"/><path d="M5.500 5h9v4.500h-9z" fill="#fff"/><path d="M.5 1h4v3h-4zM2.500 4v3"/></svg>
      <svg width="17" height="14" viewBox="0 0 17 14" fill="none" stroke="#e8eaea" stroke-width="1.100"><path d="M.6 4.500H3l3-3.500v12L3 9.500H.6zM8 4.500q1.500 2.500 0 5"/><path d="M10.500 3q3 4 0 8M13 1q4 6 0 12" stroke="#8d9292"/></svg>
      <svg width="15" height="15" viewBox="0 0 15 15" fill="none" stroke="#cfd3d3" stroke-width="1.200"><path d="M1 14C1 6 6 1 14 1M4.500 14C4.500 8 8 4.500 14 4.500M8 14c0-4 2-6 6-6M11.500 14c0-2 1-2.500 2.500-2.500"/></svg>
      <span class="ime">中</span>
      <div class="clock"><span>19:53</span><span>2021/8/17</span></div>
      <svg width="33" height="36" viewBox="0 0 33 36"><path d="M2 26V8l8 14L20 9v12" fill="none" stroke="#fff" stroke-width="2.600"/><path d="M6 26V16M16.500 25V16" stroke="#fff"/><circle cx="26" cy="25" r="8.500" fill="#0a0a0a" stroke="#444"/><text x="26" y="30" class="bd">1</text></svg>
      <svg width="28" height="36" viewBox="0 0 28 36"><path d="M0 7h17v14H9l-4 4v-4H0z" fill="#fff"/><path d="M3 11h11M3 14.500h11M3 18h7" stroke="#2a3030" stroke-width="1.200"/><circle cx="17" cy="26" r="8.500" fill="#3a3f40" stroke="#8a8f8f"/><text x="17" y="31" class="bd">4</text></svg>
      <i class="edge"></i>
    </div>
  </footer>
</div>
</body>
</html>
```
FILE: styles.css
```css
* { box-sizing: border-box; }
body { margin: 0; font-family: "Noto Sans CJK SC", sans-serif; font-size: 12.500px; color: #3b4248; }
svg { display: block; flex: none; overflow: visible; }
.defs { position: absolute; }
.app { width: 1596px; height: 898px; overflow: hidden; display: flex; flex-direction: column; background: #fcfefd; position: relative; }
.vline { display: block; width: 1px; height: 20px; background: #e4e6e5; }
.caret { width: 6px; height: 4px; }
.caret.up { transform: rotate(180deg); }
.ui { font-family: "Noto Sans", "Noto Sans CJK SC", sans-serif; }

/* title bar */
.titlebar { height: 31px; flex: none; display: flex; align-items: center; background: #e5eae6; }
.tab { height: 31px; display: flex; align-items: center; }
.home { width: 75px; justify-content: center; padding-right: 3px; background: #5d92f3; color: #fff; }
.docer { width: 134px; padding-left: 14px; gap: 5px; background: linear-gradient(90deg, #dde1de, #d9dad9); }
.active { width: 260px; padding-left: 11px; background: #fdfefd; color: #333; }
.fname { font: 14px "Noto Sans", sans-serif; letter-spacing: -.6px; width: 184px; margin-left: 4px; }
.mon { margin-right: 11px; }
.plus { margin-left: 11px; }
.winctl { margin-left: auto; display: grid; grid-template-columns: 33px 30px 13px 28px 30px 20px; align-items: center; width: 154px; }
.winctl > svg:nth-child(2) { margin-left: -1px; }
.winctl .vline { background: #d5d9d6; height: 24px; }
.one { font: 10px "Liberation Sans", sans-serif; fill: #666; stroke: none; }

/* menu */
.menu { height: 39px; flex: none; padding: 0 0 2px 16px; display: grid; align-items: center; white-space: nowrap;
  grid-template-columns: 20px 34px 18px 10px 24px 24px 24px 25px 18px 15px 27px 36px 50px 51px 51px 50px 50.500px 50.500px 51px 55px 78px 68px 23px 69px 94px 17px 306px 19px 51px 19px 37px 19px 34px 14px 19px 20px; }
.menu .draw { color: #ea7a63; }
.menu .pill { width: 77px; height: 22px; line-height: 21px; text-align: center; border-radius: 11px; background: #f8704c; color: #fff; font-weight: 500; }
.dim { color: #7d8286; }
.watermark { position: absolute; left: 227px; top: 28px; font: 50px/60px "Open Sans", sans-serif; font-weight: 600; color: rgba(238, 242, 238, .6); transform: scaleX(.82); transform-origin: 0 0; }

/* ribbon */
.ribbon { height: 61px; flex: none; display: flex; border-bottom: 1px solid #e6e4e5; white-space: nowrap; }
.big { position: relative; display: flex; flex-direction: column; align-items: center; padding-top: 4px; }
.big > svg:first-child { height: 25px; }
.lab { display: flex; align-items: center; gap: 3px; line-height: 18px; margin-top: 2px; }
.g-box { width: 57px; margin-left: 7px; }
.g-box > svg:first-child { margin-right: 3px; }
.g-box .lab { margin-left: 0; }
.g-brush { width: 40px; margin-left: 11px; }
.stack { position: relative; display: flex; flex-direction: column; padding-top: 0; }
.row { display: grid; align-items: center; height: 25px; }
.corner { position: absolute; right: 0; top: 52px; width: 6px; height: 6px; }
.g-font { width: 241px; margin-left: 17px; }
.r-font1 { grid-template-columns: 108px 12px 52px 19px 23px 20px; }
.r-font1 .ui { font-size: 13px; letter-spacing: -.2px; margin-left: -1.500px; }
.r-font2 { grid-template-columns: 25px 20px 26px 22px 24px 25px 19px 14px 18px 22px 20px; padding-left: 3px; }
.wen { display: flex; flex-direction: column; align-items: center; width: 16px; }
.wen b { font-weight: 500; font-size: 8px; line-height: 8px; }
.wen b + b { font-size: 10px; line-height: 10px; }
.g-para { width: 314px; margin-left: 11px; }
.r-para1 { grid-template-columns: 20px 13px 19px 22px 24px 33px 20px 14px 19px 36px 20px 53px 6px; padding-left: 1px; }
.r-para2 { grid-template-columns: 29px 24px 24px 23px 35px 26px 27px 20px 11px 20px 65px 6px; }
.sel { background: #e1e6e4; border-radius: 2px; }
.gallery { position: relative; height: 51px; margin-top: 2px; background: #fff; border: 1px solid #ebecec; display: flex; align-items: center; }
.g-art { width: 176px; margin-left: 11px; padding-left: 10px; gap: 23px; }
.g-art svg { margin-top: -3px; }
.g-art .more { margin-left: 3px; }
.wa { font: bold 38px "Open Sans", sans-serif; text-anchor: middle; }
.g-tfill, .g-sfill { width: 80px; }
.g-tfill { margin-left: 9px; }
.g-sfill { margin-left: 7px; width: 82px; }
.r-fill { grid-template-columns: 19px 54px 6px; }
.g-sfill .r-fill { grid-template-columns: 20px 53px 6px; }
.g-teff { width: 63px; margin-left: 3px; }
.g-teff > svg:first-child { margin-left: -5px; }
.g-teff .corner, .g-seff .corner { right: -5px; }
.g-shape { width: 178px; margin-left: 11px; padding-left: 4px; gap: 7px; }
.g-shape .more { margin-left: 1px; margin-top: -3px; }
.abc { width: 47px; height: 43px; border-radius: 7px; border: 1px solid; display: flex; align-items: center; justify-content: center; font: 12px "Noto Sans", sans-serif; color: #222; }
.abc.k { border: 2px solid #111; }
.abc.b { border: 1.500px solid #68a0b5; }
.abc.o { border: 1.500px solid #e9935a; }
.g-seff { width: 60px; margin-left: 4px; }
.g-conv { width: 72px; margin-left: 16px; }

/* work area */
.work { flex: 1; display: flex; min-height: 0; }
.panel { width: 273px; display: flex; flex-direction: column; border-right: 1px solid #e6e8e7; }
.ptabs { height: 46px; flex: none; display: flex; align-items: center; padding: 0 0 2px 7px; }
.ptabs span { margin-left: 74px; }
.ptabs .on { margin-left: 12px; width: 59px; height: 21px; line-height: 20px; text-align: center; background: #dde3e1; border-radius: 3px; }
.plist { position: relative; height: 614px; overflow: hidden; display: flex; flex-direction: column; gap: 17px; padding-top: 1px; }
.item { display: flex; height: 126px; flex: none; }
.item b { width: 34px; padding: 5px 7px 0 0; text-align: right; font: 12px/20px "DejaVu Serif", serif; color: #333; }
.thumb { width: 219px; height: 126px; background: #fff; outline: 1px solid #c4c9c6; outline-offset: -1px; overflow: hidden; }
.cur .thumb { outline: 2px solid #d2693a; outline-offset: 0; }
.item.cur b { color: #c8623a; }
.mini-text { font: 3.600px "Lato", sans-serif; fill: #333; opacity: .8; }
.mini-text.blue { fill: #3c5a88; }
.mini-text .gray { fill: #777; }
.pscroll { position: absolute; left: 260px; top: 64px; width: 8px; height: 293px; border-radius: 4px; background: #e5e7e6; }
.padd { flex: 1; display: flex; align-items: center; padding: 0 0 2px 127px; }

.center { width: 1278px; display: flex; flex-direction: column; }
.canvas { height: 663px; display: flex; }
.stage { flex: 1; padding: 18px 0 0 66px; }
.slide { position: relative; width: 1115px; height: 626px; background: #fff; box-shadow: 1px 1px 5px 2px #dfe2e0; font-family: "Lato", sans-serif; color: #111; }
.deco { position: absolute; left: 887px; top: 404px; }
.grid { position: absolute; left: 103px; top: 52px; width: 761px; height: 257px; border-collapse: collapse; table-layout: fixed; font-size: 18.500px; letter-spacing: -.3px; text-align: center; }
.grid td { border: 1px solid #333; padding: 0; }
.code { position: absolute; left: 477px; top: 343px; width: 600px; height: 59px; padding: 4px 0 0 8.500px; background: #5c9fd0; font-size: 19px; line-height: 25px; letter-spacing: .21px; white-space: pre; color: #0b1620; }
.result { position: absolute; left: 552.500px; top: 470px; font-size: 19px; line-height: 25px; letter-spacing: .16px; white-space: pre; color: #1f74a8; }
.textbox { position: absolute; left: 38px; top: 385px; width: 420px; white-space: pre; font-size: 21px; line-height: 28px; letter-spacing: .25px; color: #1f74a8; }
.textbox p { margin: 0 0 27.700px; }
.textbox .c { color: #111; }
.textbox mark { background: #c6c6c6; color: #555; }
.selection { position: absolute; left: 16px; top: 341px; }
.cursor { position: absolute; left: 184px; top: 151px; }
.float { position: absolute; left: 937px; top: 381px; width: 28px; display: flex; flex-direction: column; align-items: center; gap: 12px; }
.float .min { margin-bottom: -2px; }
.fb { width: 28px; height: 28px; background: #fff; box-shadow: 1px 1px 4px #b9bbba; display: flex; align-items: center; justify-content: center; }
.vbar { width: 16px; background: #ebeeed; display: flex; flex-direction: column; align-items: center; padding-top: 12px; }
.vbar i { width: 12px; height: 50px; border-radius: 6px; background: #d8dbda; margin-top: 261px; }
.vbar .nav { margin-top: 269px; }
.notes { flex: 1; background: #ebebeb; border-top: 1px solid #e2e3e2; display: flex; align-items: center; padding-left: 7px; padding-bottom: 1px; gap: 6px; font-size: 13.800px; color: #555; }
.rail { width: 45px; border-left: 1px solid #e9ebea; display: flex; flex-direction: column; align-items: center; padding-top: 11px; gap: 19.500px; }
.rail .ooo { margin-top: auto; margin-bottom: 15px; }

/* status bar */
.status { height: 35px; flex: none; border-top: 1px solid #e6e8e7; padding: 0 0 1px 11px; display: grid; align-items: center; white-space: nowrap; font-size: 12.800px;
  grid-template-columns: 77px 12px 74px 749px 20px 58px 18px 12px 19px 30px 13px 21px 36px 8px 32px 26px 30px 8px 37px 17px 12px 23px 30px 17px 23px 155px 20px; }
.status .ui { letter-spacing: -.3px; }
.play { width: 32px; height: 25px; border-radius: 2px; background: #727e93; display: flex; align-items: center; justify-content: center; }

/* taskbar */
.taskbar { height: 41px; flex: none; display: flex; align-items: center; background: linear-gradient(90deg, #222a2b, #262d2f 40%, #333738 58%, #232c2b 68%, #1f2928); }
.start { width: 50px; display: flex; justify-content: center; }
.search { width: 357px; height: 41px; background: #f4f4f4; border-top: 1px solid #d6d8d8; display: flex; align-items: center; padding: 0 0 3px 12px; gap: 11px; font-size: 15.800px; color: #333; }
.tk { width: 51.500px; height: 41px; display: flex; align-items: center; justify-content: center; }
.tk.view { width: 52px; }
.tk.run { background: linear-gradient(#72b5e2, #72b5e2) center bottom / 43px 3px no-repeat; }
.tk.cur { background: linear-gradient(#72b5e2, #72b5e2) center bottom / 100% 3px no-repeat, #565a5a; }
.pc { font: bold 7.500px "Liberation Sans", sans-serif; fill: #fff; }
.tray { margin-left: auto; width: 421px; height: 41px; display: grid; align-items: center; color: #f2f4f4; white-space: nowrap;
  grid-template-columns: 33px 41px 48px 23px 25px 27px 23px 22px 88px 48px 38px 5px; }
.temp { font-size: 16px; font-family: "Noto Sans", "Noto Sans CJK SC", sans-serif; letter-spacing: -.4px; }
.temp, .ime { padding-bottom: 2px; }
.ime { font-size: 14.500px; }
.clock { display: flex; flex-direction: column; align-items: center; font: 12.500px/19px "Noto Sans", sans-serif; letter-spacing: -.4px; width: 72px; margin-left: 2px; padding-bottom: 2px; }
.bd { font: bold 13px "Liberation Sans", sans-serif; fill: #fff; text-anchor: middle; }
.edge { width: 1px; height: 41px; background: #6a7070; }
```
